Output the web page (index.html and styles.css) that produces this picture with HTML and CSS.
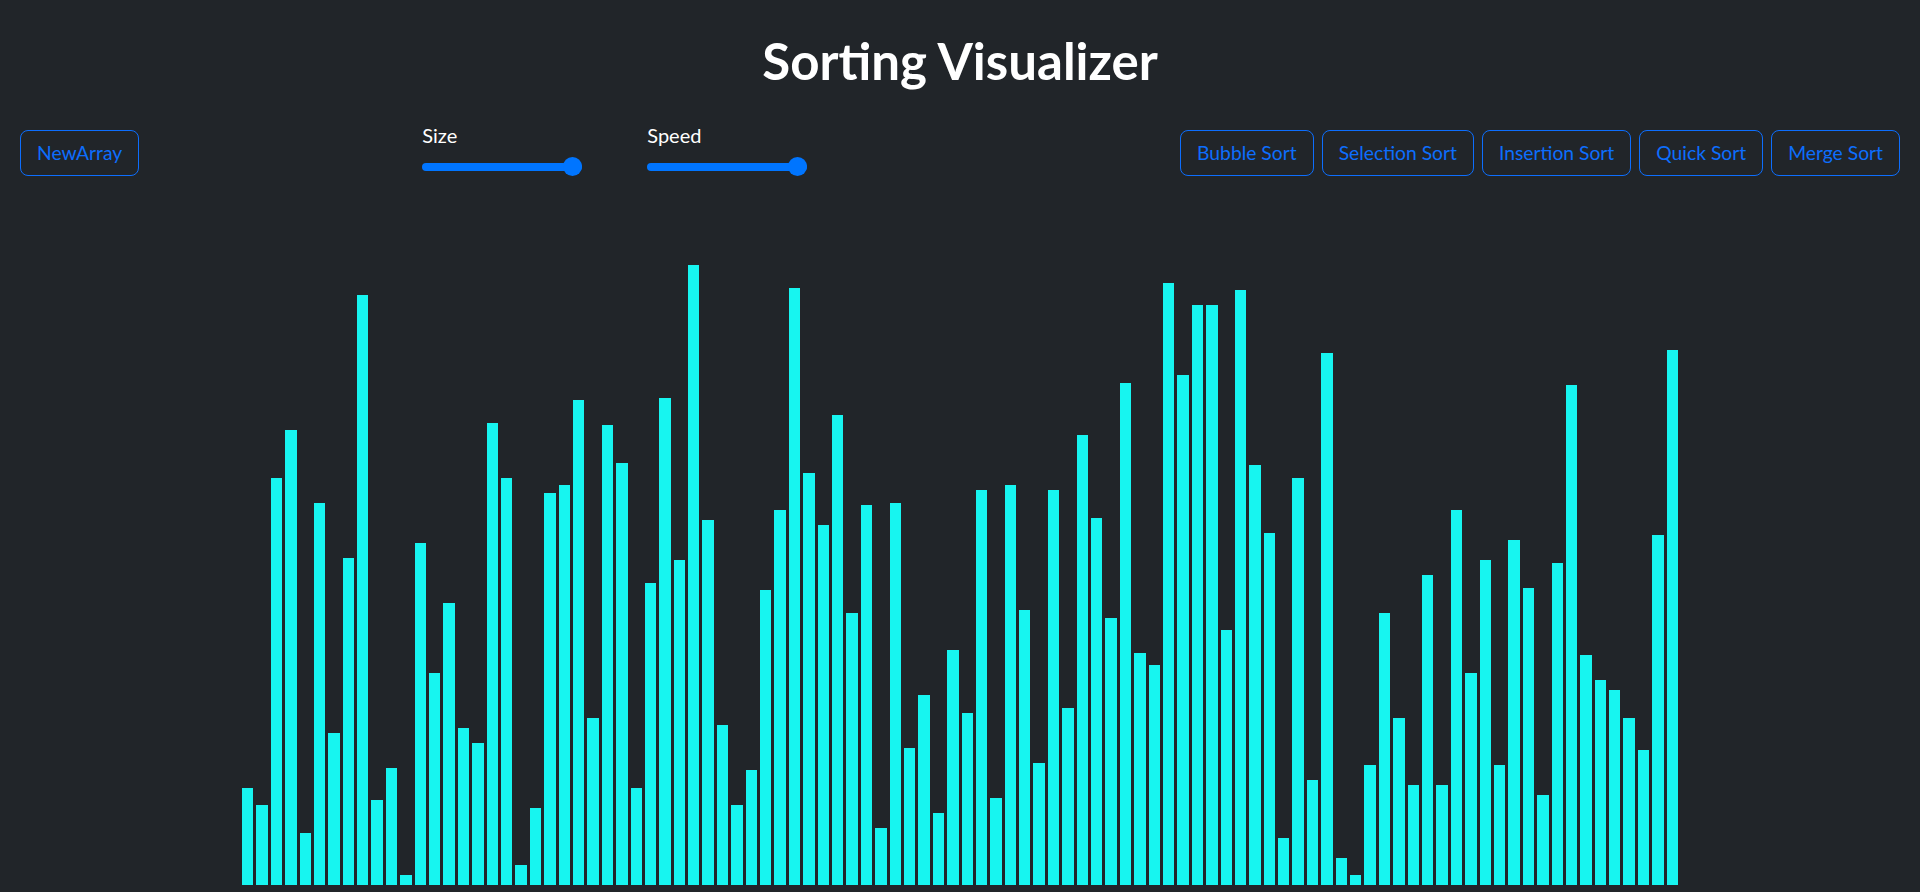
FILE: index.html
```html
<!DOCTYPE html>
<html lang="en">
<head>
<meta charset="utf-8">
<title>Sorting Visualizer</title>
<link rel="stylesheet" href="styles.css">
</head>
<body>
<header class="title">Sorting Visualizer</header>
<nav class="toolbar">
  <button class="btn">NewArray</button>
  <div class="controls">
    <div class="control">
      <label class="control-label" for="size">Size</label>
      <input class="slider" id="size" type="range" min="10" max="100" value="100">
    </div>
    <div class="control">
      <label class="control-label" for="speed">Speed</label>
      <input class="slider" id="speed" type="range" min="1" max="100" value="100">
    </div>
  </div>
  <div class="sorts">
    <button class="btn">Bubble Sort</button>
    <button class="btn">Selection Sort</button>
    <button class="btn">Insertion Sort</button>
    <button class="btn">Quick Sort</button>
    <button class="btn">Merge Sort</button>
  </div>
</nav>
<main class="bars">
<div class="bar" style="height:97px"></div><div class="bar" style="height:80px"></div><div class="bar" style="height:407px"></div><div class="bar" style="height:455px"></div><div class="bar" style="height:52px"></div><div class="bar" style="height:382px"></div><div class="bar" style="height:152px"></div><div class="bar" style="height:327px"></div><div class="bar" style="height:590px"></div><div class="bar" style="height:85px"></div>
<div class="bar" style="height:117px"></div><div class="bar" style="height:10px"></div><div class="bar" style="height:342px"></div><div class="bar" style="height:212px"></div><div class="bar" style="height:282px"></div><div class="bar" style="height:157px"></div><div class="bar" style="height:142px"></div><div class="bar" style="height:462px"></div><div class="bar" style="height:407px"></div><div class="bar" style="height:20px"></div>
<div class="bar" style="height:77px"></div><div class="bar" style="height:392px"></div><div class="bar" style="height:400px"></div><div class="bar" style="height:485px"></div><div class="bar" style="height:167px"></div><div class="bar" style="height:460px"></div><div class="bar" style="height:422px"></div><div class="bar" style="height:97px"></div><div class="bar" style="height:302px"></div><div class="bar" style="height:487px"></div>
<div class="bar" style="height:325px"></div><div class="bar" style="height:620px"></div><div class="bar" style="height:365px"></div><div class="bar" style="height:160px"></div><div class="bar" style="height:80px"></div><div class="bar" style="height:115px"></div><div class="bar" style="height:295px"></div><div class="bar" style="height:375px"></div><div class="bar" style="height:597px"></div><div class="bar" style="height:412px"></div>
<div class="bar" style="height:360px"></div><div class="bar" style="height:470px"></div><div class="bar" style="height:272px"></div><div class="bar" style="height:380px"></div><div class="bar" style="height:57px"></div><div class="bar" style="height:382px"></div><div class="bar" style="height:137px"></div><div class="bar" style="height:190px"></div><div class="bar" style="height:72px"></div><div class="bar" style="height:235px"></div>
<div class="bar" style="height:172px"></div><div class="bar" style="height:395px"></div><div class="bar" style="height:87px"></div><div class="bar" style="height:400px"></div><div class="bar" style="height:275px"></div><div class="bar" style="height:122px"></div><div class="bar" style="height:395px"></div><div class="bar" style="height:177px"></div><div class="bar" style="height:450px"></div><div class="bar" style="height:367px"></div>
<div class="bar" style="height:267px"></div><div class="bar" style="height:502px"></div><div class="bar" style="height:232px"></div><div class="bar" style="height:220px"></div><div class="bar" style="height:602px"></div><div class="bar" style="height:510px"></div><div class="bar" style="height:580px"></div><div class="bar" style="height:580px"></div><div class="bar" style="height:255px"></div><div class="bar" style="height:595px"></div>
<div class="bar" style="height:420px"></div><div class="bar" style="height:352px"></div><div class="bar" style="height:47px"></div><div class="bar" style="height:407px"></div><div class="bar" style="height:105px"></div><div class="bar" style="height:532px"></div><div class="bar" style="height:27px"></div><div class="bar" style="height:10px"></div><div class="bar" style="height:120px"></div><div class="bar" style="height:272px"></div>
<div class="bar" style="height:167px"></div><div class="bar" style="height:100px"></div><div class="bar" style="height:310px"></div><div class="bar" style="height:100px"></div><div class="bar" style="height:375px"></div><div class="bar" style="height:212px"></div><div class="bar" style="height:325px"></div><div class="bar" style="height:120px"></div><div class="bar" style="height:345px"></div><div class="bar" style="height:297px"></div>
<div class="bar" style="height:90px"></div><div class="bar" style="height:322px"></div><div class="bar" style="height:500px"></div><div class="bar" style="height:230px"></div><div class="bar" style="height:205px"></div><div class="bar" style="height:195px"></div><div class="bar" style="height:167px"></div><div class="bar" style="height:135px"></div><div class="bar" style="height:350px"></div><div class="bar" style="height:535px"></div>
</main>
</body>
</html>
```

FILE: styles.css
```css
* { box-sizing: border-box; }

html, body {
  margin: 0;
  height: 100%;
}

body {
  background: #212529;
  color: #ffffff;
  font-family: Lato, "Open Sans", "Noto Sans", sans-serif;
  overflow: hidden;
}

.title {
  padding-top: 31px;
  font-size: 51px;
  line-height: 60px;
  font-weight: 700;
  text-align: center;
  color: #ffffff;
}

.toolbar {
  display: flex;
  align-items: flex-start;
  margin-top: 34px;
  padding: 0 16px;
  height: 52px;
}

.btn {
  margin: 5px 4px 0;
  padding: 7px 16px;
  font-family: inherit;
  font-size: 19.3px;
  line-height: 30px;
  color: #0d6efd;
  background: transparent;
  border: 1px solid #0d6efd;
  border-radius: 8px;
  cursor: pointer;
}

.controls {
  display: flex;
  gap: 65px;
  margin-left: 279px;
}

.control {
  display: flex;
  flex-direction: column;
}

.control-label {
  font-size: 20px;
  line-height: 20px;
  color: #ffffff;
  margin-bottom: 12px;
}

.slider {
  -webkit-appearance: none;
  appearance: none;
  display: block;
  width: 160px;
  height: 19px;
  margin: 0;
  background: transparent;
}

.slider::-webkit-slider-runnable-track {
  height: 8px;
  border-radius: 4px;
  background: #0075ff;
}

.slider::-webkit-slider-thumb {
  -webkit-appearance: none;
  appearance: none;
  width: 19px;
  height: 19px;
  margin-top: -5.5px;
  border-radius: 50%;
  background: #0075ff;
}

.sorts {
  display: flex;
  margin-left: auto;
}

.bars {
  display: flex;
  align-items: flex-end;
  justify-content: center;
  height: 700px;
  margin-top: 8px;
}

.bar {
  width: 11.4px;
  margin: 0 1.5px;
  background: #17f5f0;
}
```
